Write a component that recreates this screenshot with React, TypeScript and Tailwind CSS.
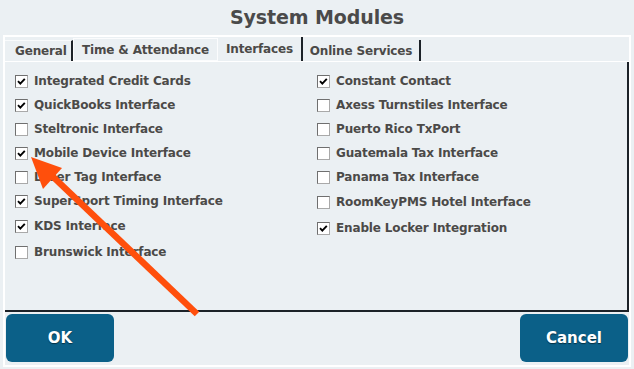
import React from 'react'

const leftItems = [
  { label: 'Integrated Credit Cards', checked: true },
  { label: 'QuickBooks Interface', checked: true },
  { label: 'Steltronic Interface', checked: false },
  { label: 'Mobile Device Interface', checked: true },
  { label: 'Laser Tag Interface', checked: false },
  { label: 'SuperSport Timing Interface', checked: true },
  { label: 'KDS Interface', checked: true },
  { label: 'Brunswick Interface', checked: false },
]

const rightItems = [
  { label: 'Constant Contact', checked: true },
  { label: 'Axess Turnstiles Interface', checked: false },
  { label: 'Puerto Rico TxPort', checked: false },
  { label: 'Guatemala Tax Interface', checked: false },
  { label: 'Panama Tax Interface', checked: false },
  { label: 'RoomKeyPMS Hotel Interface', checked: false },
  { label: 'Enable Locker Integration', checked: true },
]

function CheckRow({ label, checked, tall }: { label: string; checked: boolean; tall: boolean }) {
  return (
    <div className={tall ? 'flex items-center h-[26px]' : 'flex items-center h-[24px]'}>
      <div className="w-[13px] h-[13px] bg-white border border-t-[#6f6f6f] border-l-[#6f6f6f] border-r-[#a9a9a9] border-b-[#a9a9a9] flex items-center justify-center shrink-0">
        {checked && (
          <svg width="11" height="11" viewBox="0 0 11 11">
            <path d="M2 5.2 L4.3 7.6 L8.8 2.8" fill="none" stroke="#000" strokeWidth="1.9" />
          </svg>
        )}
      </div>
      <span className="ml-[6px] whitespace-nowrap">{label}</span>
    </div>
  )
}

export default function App() {
  return (
    <div
      className="relative w-[634px] h-[369px] bg-[#ebf0f3] flex flex-col text-[#4b4a48] font-bold overflow-hidden"
      style={{ fontFamily: '"DejaVu Sans", Verdana, sans-serif' }}
    >
      {/* title */}
      <div className="h-[35px] flex items-center justify-center text-[19px] tracking-[-0.1px] text-[#4a4a4a]">
        System Modules
      </div>

      {/* dialog frame */}
      <div className="mx-[3px] h-[332px] border-2 border-white flex flex-col">
        {/* tabs */}
        <div className="flex h-[24px] text-[12px] tracking-[-0.15px]">
          <div className="w-[68px] flex items-center pl-[10px] border-r-2 border-r-[#1c2228] mt-[3px] border-t border-t-white/70">
            General
          </div>
          <div className="w-[145px] flex items-center justify-center border border-white/80 mt-[1px]">
            Time &amp; Attendance
          </div>
          <div className="w-[85px] flex items-start justify-center pt-[3px] border-r-2 border-r-[#1c2228]">
            Interfaces
          </div>
          <div className="w-[118px] flex items-center justify-center border-r-2 border-r-[#1c2228] mt-[3px]">
            Online Services
          </div>
          <div className="flex-1" />
        </div>
        <div className="h-[1px] bg-white" />

        {/* panel */}
        <div className="h-[250px] border-r-2 border-b-2 border-[#1c2228] flex text-[12px] tracking-[-0.15px] pt-[7px]">
          <div className="w-[312px] pl-[10px] flex flex-col">
            {leftItems.map((it, i) => (
              <CheckRow key={it.label} label={it.label} checked={it.checked} tall={i >= 6} />
            ))}
          </div>
          <div className="flex-1 flex flex-col">
            {rightItems.map((it, i) => (
              <CheckRow key={it.label} label={it.label} checked={it.checked} tall={i >= 5} />
            ))}
          </div>
        </div>

        {/* buttons */}
        <div className="flex justify-between items-start pt-[2px] pl-[1px] pr-[1px]">
          <button className="w-[108px] h-[48px] rounded-[6px] bg-[#0b6088] text-white text-[15px] font-bold [text-shadow:0_1px_1px_rgba(0,0,0,0.5)]">
            OK
          </button>
          <button className="w-[108px] h-[48px] rounded-[6px] bg-[#0b6088] text-white text-[15px] font-bold [text-shadow:0_1px_1px_rgba(0,0,0,0.5)]">
            Cancel
          </button>
        </div>
      </div>

      {/* annotation arrow */}
      <svg className="absolute inset-0 pointer-events-none" width="634" height="369" viewBox="0 0 634 369">
        <line x1="197" y1="314" x2="48" y2="172" stroke="#ff4f0c" strokeWidth="6.5" />
        <polygon points="31,157 62,168 43,189" fill="#ff4f0c" />
      </svg>
    </div>
  )
}
